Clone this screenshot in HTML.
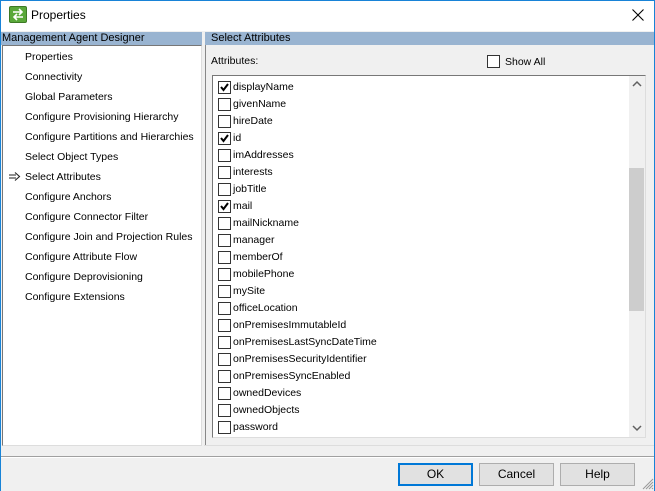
<!DOCTYPE html>
<html><head><style>
*{margin:0;padding:0;box-sizing:border-box}
body{width:655px;height:491px;overflow:hidden;background:#f0f0f0;font-family:"Liberation Sans",sans-serif;font-size:10.5px;color:#000;position:relative}
.a{position:absolute}
.t{white-space:nowrap;line-height:13px}
.cb{position:absolute;width:13px;height:13px;border:1px solid #333;background:#fff}
.btn{position:absolute;top:463px;height:23px;background:#e1e1e1;border:1px solid #adadad;text-align:center;line-height:21px;font-size:12px}
</style></head><body>
<div class="a" style="left:0;top:0;width:655px;height:31px;background:#fff"></div>
<div class="a" style="left:9px;top:6px;width:18px;height:17px;background:#5aa83a;border:1px solid #3d7a25;border-radius:2px"></div>
<svg class="a" style="left:10px;top:7px" width="16" height="15" viewBox="0 0 16 15"><path d="M3 5h9M9 2l3 3-3 3M13 10H4M7 7l-3 3 3 3" stroke="#fff" stroke-width="1.6" fill="none"/></svg>
<div class="a t" style="left:31px;top:9px;font-size:12px">Properties</div>
<svg class="a" style="left:632px;top:9px" width="12" height="12"><path d="M0.5 0.5L11.5 11.5M11.5 0.5L0.5 11.5" stroke="#000" stroke-width="1.1"/></svg>
<div class="a" style="left:0;top:32px;width:202px;height:13px;background:#99b4d1"></div>
<div class="a t" style="left:2px;top:32px;font-size:11px">Management Agent Designer</div>
<div class="a" style="left:205px;top:32px;width:449px;height:13px;background:#99b4d1"></div>
<div class="a t" style="left:211px;top:32px;font-size:11px">Select Attributes</div>
<div class="a" style="left:2px;top:45px;width:200px;height:401px;background:#fff;border-left:1px solid #777;border-top:1px solid #777;border-right:1px solid #ddd;border-bottom:1px solid #ddd"></div>
<div class="a" style="left:205px;top:45px;width:1px;height:401px;background:#888"></div>
<div class="a" style="left:204px;top:445px;width:450px;height:1px;background:#ddd"></div>
<div class="a" style="left:212px;top:75px;width:434px;height:363px;background:#fff;border-left:1px solid #777;border-top:1px solid #777;border-right:1px solid #ddd;border-bottom:1px solid #ddd"></div>
<div class="a" style="left:629px;top:76px;width:16px;height:361px;background:#f0f0f0"></div>
<div class="a" style="left:629px;top:168px;width:15px;height:143px;background:#cdcdcd"></div>
<svg class="a" style="left:632px;top:80px" width="10" height="8"><path d="M1 6l4-4 4 4" stroke="#606060" stroke-width="1.5" fill="none"/></svg>
<svg class="a" style="left:632px;top:424px" width="10" height="8"><path d="M1 2l4 4 4-4" stroke="#606060" stroke-width="1.5" fill="none"/></svg>
<div class="a t" style="left:211px;top:55px">Attributes:</div>
<div class="cb" style="left:487px;top:55px"></div>
<div class="a t" style="left:505px;top:56px">Show All</div>
<div class="a" style="left:0;top:456px;width:655px;height:1px;background:#a0a0a0"></div>
<div class="a" style="left:0;top:457px;width:655px;height:1px;background:#fff"></div>
<div class="a" style="left:0;top:0;width:1px;height:491px;background:#1883d7"></div>
<div class="a" style="left:654px;top:0;width:1px;height:491px;background:#1883d7"></div>
<div class="a" style="left:0;top:0;width:655px;height:1px;background:#1883d7"></div>
<svg class="a" style="left:9px;top:172px" width="12" height="9"><path d="M0 3h7M0 6h7M6 0.5l4.5 4-4.5 4" stroke="#222" stroke-width="1.1" fill="none"/></svg>
<div id="L"></div><div id="R"></div>
<div class="btn" style="left:398px;width:75px;border:2px solid #0078d7;line-height:19px">OK</div>
<div class="btn" style="left:479px;width:75px">Cancel</div>
<div class="btn" style="left:560px;width:75px">Help</div>
<svg class="a" style="left:642px;top:478px" width="12" height="12"><path d="M11 1L1 11M11 4L4 11M11 7L7 11M11 10L10 11" stroke="#999" stroke-width="1"/></svg>
<script>
var l=["Properties","Connectivity","Global Parameters","Configure Provisioning Hierarchy","Configure Partitions and Hierarchies","Select Object Types","Select Attributes","Configure Anchors","Configure Connector Filter","Configure Join and Projection Rules","Configure Attribute Flow","Configure Deprovisioning","Configure Extensions"];
var h="";l.forEach(function(s,i){h+='<div class="a t" style="left:25px;top:'+(51+i*20)+'px">'+s+'</div>'});
document.getElementById("L").outerHTML=h;
var r=["displayName","givenName","hireDate","id","imAddresses","interests","jobTitle","mail","mailNickname","manager","memberOf","mobilePhone","mySite","officeLocation","onPremisesImmutableId","onPremisesLastSyncDateTime","onPremisesSecurityIdentifier","onPremisesSyncEnabled","ownedDevices","ownedObjects","password"];
var c={0:1,3:1,7:1};h="";
r.forEach(function(s,i){var y=81+i*17;h+='<div class="cb" style="left:218px;top:'+y+'px">'+(c[i]?'<svg width="11" height="11" style="position:absolute;left:0;top:0"><path d="M2 5l2.5 3L9 2" stroke="#000" stroke-width="2" fill="none"/></svg>':'')+'</div><div class="a t" style="left:233px;top:'+(y)+'px">'+s+'</div>'});
document.getElementById("R").outerHTML=h;
</script>
</body></html>
